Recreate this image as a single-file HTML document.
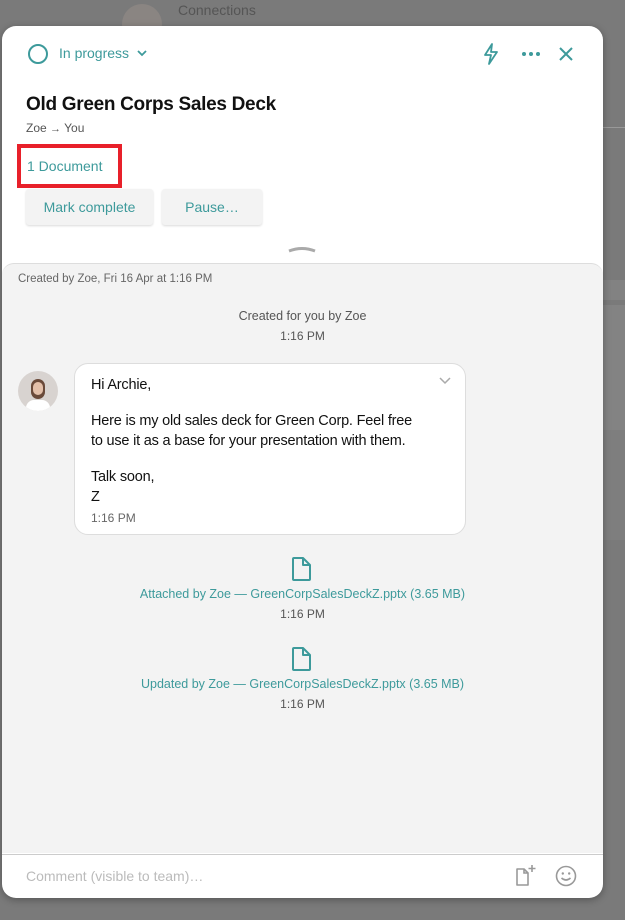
<!DOCTYPE html>
<html><head><meta charset="utf-8"><style>
*{box-sizing:border-box;margin:0;padding:0}
body{width:625px;height:920px;background:#777;font-family:"Liberation Sans",sans-serif;position:relative;overflow:hidden}
.bg1{position:absolute;left:0;top:0;width:625px;height:920px;background:#7a7a7a}
.bgl{position:absolute;left:600px;width:25px;background:#808080}
.panel{position:absolute;left:2px;top:26px;width:601px;height:872px;background:#fff;border-radius:14px;overflow:hidden;box-shadow:0 2px 8px rgba(0,0,0,.3)}
.teal{color:#3d9a9b}
.t{position:absolute;white-space:nowrap}
.btn{position:absolute;top:163px;height:36px;background:#f3f3f3;border-radius:3px;box-shadow:0 1px 2px rgba(0,0,0,.15);color:#3d9a9b;font-size:14px;text-align:center;line-height:36px}
.feed{position:absolute;left:0;top:237px;width:601px;height:590px;background:#f3f3f3;border-top:1px solid #ddd;border-radius:12px 12px 0 0}
.c{position:absolute;left:0;width:601px;text-align:center;white-space:nowrap}
</style></head><body>
<div class="bg1"></div>
<div style="position:absolute;left:122px;top:4px;width:40px;height:40px;border-radius:50%;background:#8a8582"></div>
<div class="t" style="left:178px;top:2px;font-size:14px;color:#555">Connections</div>
<div class="bgl" style="top:127px;height:1px;background:#999"></div>
<div class="bgl" style="top:280px;height:20px;background:#828282"></div>
<div class="bgl" style="top:305px;height:125px;background:#838383"></div>
<div class="bgl" style="top:430px;height:110px;background:#7e7e7e"></div>
<div class="panel">
 <svg style="position:absolute;left:25px;top:17px" width="22" height="22"><circle cx="11" cy="11" r="9" fill="none" stroke="#3d9a9b" stroke-width="2"/></svg>
 <div class="t teal" style="left:57px;top:19px;font-size:14px">In progress</div>
 <svg style="position:absolute;left:134px;top:23px" width="12" height="10"><path d="M2 2l4 4 4-4" fill="none" stroke="#3d9a9b" stroke-width="1.8"/></svg>
 <svg style="position:absolute;left:479px;top:16px" width="20" height="24"><path d="M11 2L4 13h6l-2 9 8-12h-6z" fill="none" stroke="#3d9a9b" stroke-width="1.8" stroke-linejoin="round"/></svg>
 <svg style="position:absolute;left:519px;top:24px" width="20" height="8"><circle cx="3" cy="4" r="2" fill="#3d9a9b"/><circle cx="10" cy="4" r="2" fill="#3d9a9b"/><circle cx="17" cy="4" r="2" fill="#3d9a9b"/></svg>
 <svg style="position:absolute;left:556px;top:20px" width="16" height="16"><path d="M2 2l12 12M14 2L2 14" stroke="#3d9a9b" stroke-width="2"/></svg>
 <div class="t" style="left:24px;top:68px;font-size:19px;font-weight:bold;color:#111;letter-spacing:-.3px">Old Green Corps Sales Deck</div>
 <div class="t" style="left:24px;top:95px;font-size:12px;color:#555">Zoe <span style="font-size:11px">→</span> You</div>
 <div style="position:absolute;left:15px;top:118px;width:105px;height:44px;border:4px solid #e8202a"></div>
 <div class="t teal" style="left:25px;top:132px;font-size:14px">1 Document</div>
 <div class="btn" style="left:24px;width:127px">Mark complete</div>
 <div class="btn" style="left:160px;width:100px">Pause…</div>
 <svg style="position:absolute;left:286px;top:219px" width="28" height="8"><path d="M1 6Q14 1 27 6" fill="none" stroke="#aaa" stroke-width="3"/></svg>
 <div class="feed">
  <div class="t" style="left:16px;top:9px;font-size:11.5px;color:#666">Created by Zoe, Fri 16 Apr at 1:16 PM</div>
  <div class="c" style="top:45px;font-size:12.5px;color:#555">Created for you by Zoe</div>
  <div class="c" style="top:65px;font-size:12px;color:#555">1:16 PM</div>
  <div style="position:absolute;left:16px;top:107px;width:40px;height:40px;border-radius:50%;background:#d8d3d0;overflow:hidden"><div style="position:absolute;left:13px;top:8px;width:14px;height:20px;border-radius:7px;background:#6a4a3a"></div><div style="position:absolute;left:15px;top:11px;width:10px;height:13px;border-radius:5px;background:#e3c0aa"></div><div style="position:absolute;left:8px;top:29px;width:24px;height:14px;border-radius:8px 8px 0 0;background:#fff"></div></div>
  <div style="position:absolute;left:72px;top:99px;width:392px;height:172px;background:#fff;border:1px solid #ddd;border-radius:14px">
   <svg style="position:absolute;left:364px;top:13px" width="12" height="8"><path d="M1 1l5 5 5-5" fill="none" stroke="#aaa" stroke-width="1.5"/></svg>
   <div style="position:absolute;left:16px;top:11px;font-size:14.5px;color:#111;line-height:20px;letter-spacing:-.2px">Hi Archie,<br><div style="height:16px"></div>Here is my old sales deck for Green Corp. Feel free<br>to use it as a base for your presentation with them.<br><div style="height:16px"></div>Talk soon,<br>Z</div>
   <div class="t" style="left:16px;top:147px;font-size:12px;color:#666">1:16 PM</div>
  </div>
  <svg style="position:absolute;left:289px;top:292px" width="22" height="26"><path d="M3 2h9l7 7v14a1 1 0 0 1-1 1H3a1 1 0 0 1-1-1V3a1 1 0 0 1 1-1zM12 2v7h7" fill="none" stroke="#3d9a9b" stroke-width="2" stroke-linejoin="round"/></svg>
  <div class="c teal" style="top:323px;font-size:12.5px">Attached by Zoe — GreenCorpSalesDeckZ.pptx (3.65 MB)</div>
  <div class="c" style="top:343px;font-size:12px;color:#555">1:16 PM</div>
  <svg style="position:absolute;left:289px;top:382px" width="22" height="26"><path d="M3 2h9l7 7v14a1 1 0 0 1-1 1H3a1 1 0 0 1-1-1V3a1 1 0 0 1 1-1zM12 2v7h7" fill="none" stroke="#3d9a9b" stroke-width="2" stroke-linejoin="round"/></svg>
  <div class="c teal" style="top:413px;font-size:12.5px">Updated by Zoe — GreenCorpSalesDeckZ.pptx (3.65 MB)</div>
  <div class="c" style="top:433px;font-size:12px;color:#555">1:16 PM</div>
 </div>
 <div style="position:absolute;left:0;top:828px;width:601px;height:1px;background:#ccc"></div>
 <div class="t" style="left:24px;top:842px;font-size:14px;color:#bbb">Comment (visible to team)…</div>
 <svg style="position:absolute;left:512px;top:838px" width="24" height="24"><path d="M3 5h7l4 4v12H3z" fill="none" stroke="#999" stroke-width="1.6" stroke-linejoin="round"/><path d="M10 5v4h4M18 1v7M14.5 4.5h7" fill="none" stroke="#999" stroke-width="1.6"/></svg>
 <svg style="position:absolute;left:553px;top:839px" width="22" height="22"><circle cx="11" cy="11" r="9.5" fill="none" stroke="#999" stroke-width="1.6"/><circle cx="7.8" cy="8.5" r="1.2" fill="#999"/><circle cx="14.2" cy="8.5" r="1.2" fill="#999"/><path d="M6.5 13q4.5 4 9 0" fill="none" stroke="#999" stroke-width="1.6"/></svg>
</div>
</body></html>
